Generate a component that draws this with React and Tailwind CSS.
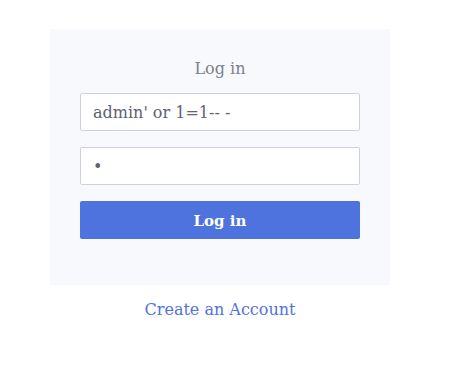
import React from "react";

export default function App() {
  return (
    <div className="min-h-screen bg-white pt-[29px] font-['DejaVu_Serif',serif]">
      <div className="ml-[50px] w-[340px] flex flex-col">
        <div className="bg-[#f8f9fd] pt-[28px] pb-[46px] px-[30px] flex flex-col">
          <h1 className="text-center text-[16px] leading-[24px] text-[#7c7f8e] mb-[12px]">Log in</h1>
          <input
            type="text"
            readOnly
            value="admin' or 1=1-- -"
            className="h-[38px] w-full bg-white border border-[#cfd2de] rounded-[2px] px-[12px] text-[16px] text-[#5f6270] outline-none font-['DejaVu_Serif',serif]"
          />
          <input
            type="password"
            readOnly
            value="a"
            className="mt-[16px] h-[38px] w-full bg-white border border-[#cfd2de] rounded-[2px] px-[12px] text-[16px] text-[#5f6270] outline-none font-['DejaVu_Serif',serif]"
          />
          <button className="mt-[16px] h-[38px] w-full bg-[#4f73de] rounded-[2px] pt-[2px] text-white font-bold text-[15px] font-['DejaVu_Serif',serif]">
            Log in
          </button>
        </div>
        <a className="mt-[13px] text-center text-[16px] leading-[24px] text-[#4f73de]">Create an Account</a>
      </div>
    </div>
  );
}
